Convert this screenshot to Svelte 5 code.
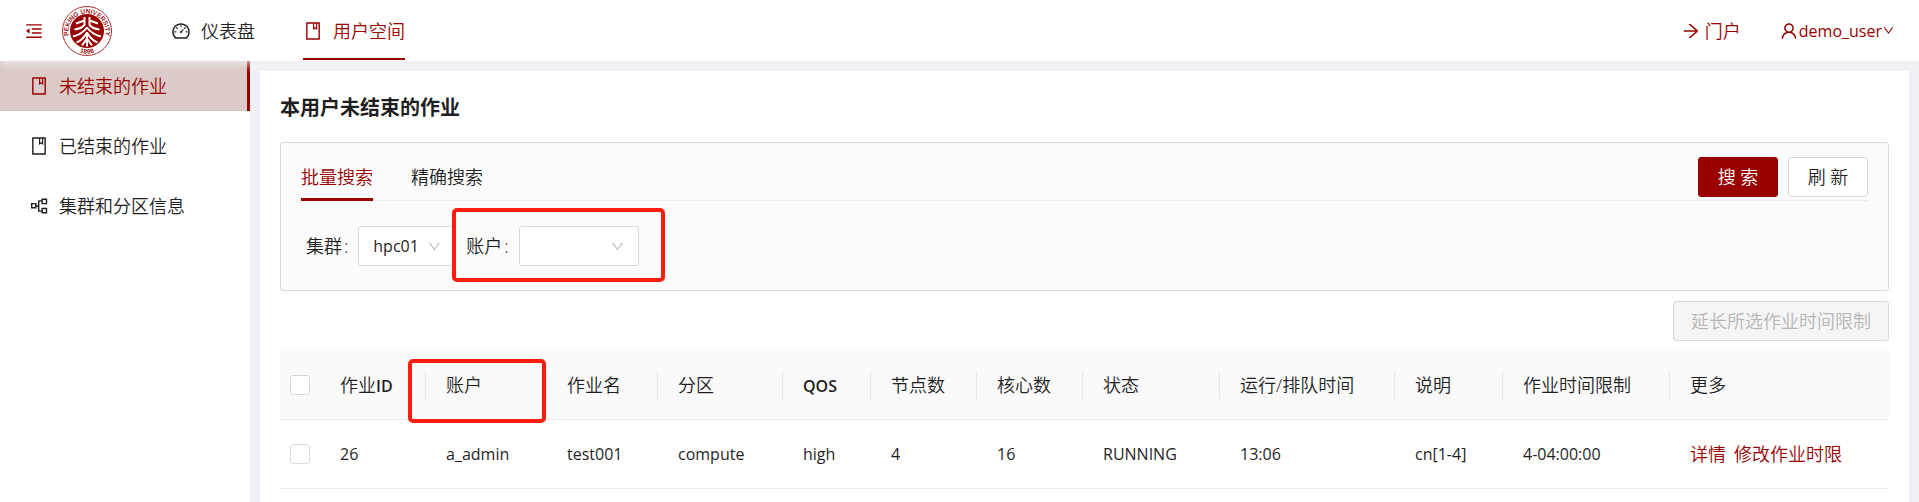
<script>
  const icons = {
    fold: 'M408 442h480c4.4 0 8-3.6 8-8v-56c0-4.4-3.6-8-8-8H408c-4.4 0-8 3.6-8 8v56c0 4.4 3.6 8 8 8zm-8 204c0 4.4 3.6 8 8 8h480c4.4 0 8-3.6 8-8v-56c0-4.4-3.6-8-8-8H408c-4.4 0-8 3.6-8 8v56zm504-486H120c-4.4 0-8 3.6-8 8v56c0 4.4 3.6 8 8 8h784c4.4 0 8-3.6 8-8v-56c0-4.4-3.6-8-8-8zm0 632H120c-4.4 0-8 3.6-8 8v56c0 4.4 3.6 8 8 8h784c4.4 0 8-3.6 8-8v-56c0-4.4-3.6-8-8-8zM115.4 518.9L271.7 642c5.8 4.6 14.4.5 14.4-6.9V388.9c0-7.4-8.5-11.5-14.4-6.9L115.4 505.1a8.74 8.74 0 000 13.8z',
    dashboard:
      'M924.8 385.6a446.7 446.7 0 00-96-142.4 446.7 446.7 0 00-142.4-96C631.1 123.8 572.5 112 512 112s-119.1 11.8-174.4 35.2a446.7 446.7 0 00-142.4 96 446.7 446.7 0 00-96 142.4C75.8 440.9 64 499.5 64 560c0 132.7 58.3 257.7 159.9 343.1l1.7 1.4c5.8 4.8 13.1 7.5 20.6 7.5h531.7c7.5 0 14.8-2.7 20.6-7.5l1.7-1.4C901.7 817.7 960 692.7 960 560c0-60.5-11.9-119.1-35.2-174.4zM761.4 836H262.6A371.12 371.12 0 01140 560c0-99.4 38.7-192.8 109-263 70.3-70.3 163.7-109 263-109 99.4 0 192.8 38.7 263 109 70.3 70.3 109 163.7 109 263 0 105.6-44.5 205.5-122.6 276zM623.5 421.5a8.03 8.03 0 00-11.3 0L527.7 506c-18.7-5-39.4-.2-54.1 14.5a55.95 55.95 0 000 79.2 55.95 55.95 0 0079.2 0 55.87 55.87 0 0014.5-54.1l84.5-84.5c3.1-3.1 3.1-8.2 0-11.3l-28.3-28.3zM490 320h44c4.4 0 8-3.6 8-8v-80c0-4.4-3.6-8-8-8h-44c-4.4 0-8 3.6-8 8v80c0 4.4 3.6 8 8 8zm260 218v44c0 4.4 3.6 8 8 8h80c4.4 0 8-3.6 8-8v-44c0-4.4-3.6-8-8-8h-80c-4.4 0-8 3.6-8 8zm12.7-197.2l-31.1-31.1a8.03 8.03 0 00-11.3 0l-56.6 56.6a8.03 8.03 0 000 11.3l31.1 31.1c3.1 3.1 8.2 3.1 11.3 0l56.6-56.6c3.1-3.1 3.1-8.2 0-11.3zm-458.6-31.1a8.03 8.03 0 00-11.3 0l-31.1 31.1a8.03 8.03 0 000 11.3l56.6 56.6c3.1 3.1 8.2 3.1 11.3 0l31.1-31.1c3.1-3.1 3.1-8.2 0-11.3l-56.6-56.6zM262 530h-80c-4.4 0-8 3.6-8 8v44c0 4.4 3.6 8 8 8h80c4.4 0 8-3.6 8-8v-44c0-4.4-3.6-8-8-8z',
    book: 'M832 64H192c-17.7 0-32 14.3-32 32v832c0 17.7 14.3 32 32 32h640c17.7 0 32-14.3 32-32V96c0-17.7-14.3-32-32-32zm-260 72h96v209.9L621.5 312 572 347.4V136zm220 752H232V136h280v296.9c0 3.3 1 6.6 3 9.3a15.9 15.9 0 0022.3 3.7l83.8-59.9 81.4 59.4c2.7 2 6 3.1 9.4 3.1 8.8 0 16-7.2 16-16V136h64v752z',
    nodes:
      'M100 352h288v122h72V246c0-20 12-34 34-34h142v-84h296v296H636V284H532v456h104V600h296v296H636v-84H494c-22 0-34-14-34-34V546h-72v94H100zM172 424v144h144V424zM708 200v152h152V200zM708 672v152h152V672z',
    arrow: 'M869 487.8L491.2 159.9c-2.9-2.5-6.6-3.9-10.5-3.9h-88.5c-7.4 0-10.8 9.2-5.2 14l350.2 304H152c-4.4 0-8 3.6-8 8v60c0 4.4 3.6 8 8 8h585.1L386.9 854c-5.6 4.9-2.2 14 5.2 14h91.5c1.9 0 3.8-.7 5.2-2L869 536.2a32.07 32.07 0 000-48.4z',
    user: 'M858.5 763.6a374 374 0 00-80.6-119.5 375.63 375.63 0 00-119.5-80.6c-.4-.2-.8-.3-1.2-.5C719.5 518 760 444.7 760 362c0-137-111-248-248-248S264 225 264 362c0 82.7 40.5 156 102.8 201.1-.4.2-.8.3-1.2.5-44.8 18.9-85 46-119.5 80.6a375.63 375.63 0 00-80.6 119.5A371.7 371.7 0 00136 901.8a8 8 0 008 8.2h60c4.4 0 7.9-3.5 8-7.8 2-77.2 33-149.5 87.8-204.3 56.7-56.7 132-87.9 212.2-87.9s155.5 31.2 212.2 87.9C779 752.7 810 825 812 902.2c.1 4.4 3.6 7.8 8 7.8h60a8 8 0 008-8.2c-1-47.8-10.9-94.3-29.5-138.2zM512 534c-45.9 0-89.1-17.9-121.6-50.4S340 407.9 340 362c0-45.9 17.9-89.1 50.4-121.6S466.1 190 512 190s89.1 17.9 121.6 50.4S684 316.1 684 362c0 45.9-17.9 89.1-50.4 121.6S557.9 534 512 534z',
    down: 'M884 256h-75c-5.1 0-9.9 2.5-12.9 6.6L512 654.2 227.9 262.6c-3-4.1-7.8-6.6-12.9-6.6h-75c-6.5 0-10.3 7.4-6.5 12.7l352.6 486.1c12.8 17.6 39 17.6 51.7 0l352.6-486.1c3.9-5.3.1-12.7-6.4-12.7z',
  };

  const side = [
    { icon: 'book', text: '未结束的作业', active: true },
    { icon: 'book', text: '已结束的作业', active: false },
    { icon: 'nodes', text: '集群和分区信息', active: false },
  ];

  // title, Latin suffix of the title, column share
  const columns = [
    ['作业', 'ID', 106],
    ['账户', '', 121],
    ['作业名', '', 111],
    ['分区', '', 125],
    ['', 'QOS', 88],
    ['节点数', '', 106],
    ['核心数', '', 106],
    ['状态', '', 137],
    ['运行/排队时间', '', 175],
    ['说明', '', 108],
    ['作业时间限制', '', 167],
    ['更多', '', 219],
  ];

  const jobs = [
    ['26', 'a_admin', 'test001', 'compute', 'high', '4', '16', 'RUNNING', '13:06', 'cn[1-4]', '4-04:00:00'],
  ];

  let cluster = $state('hpc01');
  let account = $state('');
</script>

{#snippet icon(name, size = 20)}
  <svg class="icon" width={size} height={size} viewBox="0 0 1024 1024" aria-hidden="true">
    <path fill-rule="evenodd" d={icons[name]} />
  </svg>
{/snippet}

<div class="page">
  <header>
    <button class="fold" aria-label="menu">{@render icon('fold')}</button>
    <a class="logo" href="#home" aria-label="home">
      <svg width="50" height="50" viewBox="0 0 100 100">
        <defs>
          <path id="ring-top" d="M22 76A37 37 0 1 1 78 76" />
          <path id="ring-bottom" d="M24 87A45 45 0 0 0 76 87" />
        </defs>
        <circle cx="50" cy="50" r="49" fill="#fff" stroke="#b03030" stroke-width="2" />
        <circle cx="50" cy="50" r="34" fill="#990000" />
        <text class="seal"><textPath href="#ring-top" startOffset="50%" text-anchor="middle">PEKING UNIVERSITY</textPath></text>
        <text class="seal"><textPath href="#ring-bottom" startOffset="50%" text-anchor="middle">1898</textPath></text>
        <g fill="none" stroke="#fff" stroke-width="4" stroke-linejoin="round">
          <path d="M45 22v17M45 29L28 35M45 38C40 44 34 46 25 47" />
          <path d="M55 22v17M55 29L72 35M55 38C60 44 66 46 75 47" />
          <path d="M50 43C43 53 34 58 22 61M50 43C57 53 66 58 78 61" />
          <path d="M50 53C45 63 38 69 29 73M50 53C55 63 62 69 71 73" />
          <path d="M50 53v28M50 65L40 79M50 65L60 79" />
        </g>
      </svg>
    </a>
    <nav class="top">
      <a href="#dashboard">{@render icon('dashboard')}<span>仪表盘</span></a>
      <a href="#user" class="active">{@render icon('book')}<span>用户空间</span></a>
    </nav>
    <div class="account">
      <a href="#portal">{@render icon('arrow')}<span>门户</span></a>
      <button class="user">{@render icon('user')}<span>demo_user</span>{@render icon('down', 13)}</button>
    </div>
  </header>

  <div class="body">
    <aside>
      {#each side as item}
        <a href="#jobs" class:active={item.active}>{@render icon(item.icon)}<span>{item.text}</span></a>
      {/each}
    </aside>

    <main>
      <h1>本用户未结束的作业</h1>

      <form class="filter" onsubmit={(e) => e.preventDefault()}>
        <div class="tabs">
          <button type="button" class="tab active">批量搜索</button>
          <button type="button" class="tab">精确搜索</button>
          <div class="actions">
            <button class="btn primary">搜 索</button>
            <button type="button" class="btn">刷 新</button>
          </div>
        </div>
        <div class="fields">
          <label for="cluster">集群<i>:</i></label>
          <span class="select small">
            <select id="cluster" bind:value={cluster}><option>hpc01</option></select>
            {@render icon('down', 15)}
          </span>
          <label for="account">账户<i>:</i></label>
          <span class="select">
            <select id="account" bind:value={account}><option value=""></option></select>
            {@render icon('down', 15)}
          </span>
          <div class="mark mark-field"></div>
        </div>
      </form>

      <div class="toolbar"><button class="btn" disabled>延长所选作业时间限制</button></div>

      <div class="table">
        <table>
          <colgroup>
            <col style="width: 40px" />
            {#each columns as [, , width]}<col style="width: {width}px" />{/each}
          </colgroup>
          <thead>
            <tr>
              <th class="check"><input type="checkbox" aria-label="all" /></th>
              {#each columns as [title, latin]}<th>{title}<b>{latin}</b></th>{/each}
            </tr>
          </thead>
          <tbody>
            {#each jobs as job}
              <tr>
                <td class="check"><input type="checkbox" aria-label={job[0]} /></td>
                {#each job as value}<td>{value}</td>{/each}
                <td class="links"><a href="#detail">详情</a><a href="#limit">修改作业时限</a></td>
              </tr>
            {/each}
          </tbody>
        </table>
        <div class="mark mark-column"></div>
      </div>
    </main>
  </div>
</div>

<style>
  :global(body) {
    background: #f0f1f6;
  }
  .page {
    display: flex;
    flex-direction: column;
    min-height: 100vh;
    color: #1f1f1f;
    font: 350 18px/28px 'Open Sans', 'Noto Sans CJK SC', sans-serif;
  }
  * {
    box-sizing: border-box;
  }
  a {
    color: inherit;
    text-decoration: none;
  }
  button,
  select {
    font: inherit;
    color: inherit;
  }
  button {
    margin: 0;
    padding: 0;
    border: 0;
    background: none;
  }
  .icon {
    flex: none;
    fill: currentColor;
  }
  header {
    position: relative;
    z-index: 1;
    display: flex;
    align-items: center;
    height: 61px;
    padding: 0 24px;
    background: #fff;
    box-shadow: 0 2px 10px #f0f1f2;
  }
  .fold,
  .account {
    color: #990000;
  }
  .fold {
    display: flex;
  }
  .logo {
    display: flex;
    margin: 0 59px 0 18px;
  }
  .seal {
    font: 700 13px 'Liberation Sans', sans-serif;
    fill: #a31515;
  }
  .top {
    display: flex;
    align-self: flex-start;
    gap: 48px;
    height: 60px;
  }
  .top a {
    display: flex;
    align-items: center;
    gap: 10px;
    padding-top: 3px;
    border-bottom: 2px solid transparent;
  }
  .top .active {
    color: #990000;
    border-color: #990000;
  }
  .account {
    display: flex;
    gap: 38px;
    margin-left: auto;
  }
  .account a,
  .user {
    display: flex;
    align-items: center;
  }
  .account a {
    gap: 4px;
  }
  .user {
    font-size: 16px;
    font-weight: 400;
  }
  .body {
    display: flex;
    flex: 1;
  }
  aside {
    flex: 0 0 250px;
    display: flex;
    flex-direction: column;
    gap: 10px;
    background: #fff;
  }
  aside a {
    display: flex;
    align-items: center;
    gap: 10px;
    height: 50px;
    padding-left: 29px;
  }
  aside .active {
    color: #990000;
    background: #dbcac7;
    border-right: 3px solid #990000;
  }
  main {
    flex: 1;
    min-width: 0;
    margin: 10px 10px 0;
    padding: 20px 20px 0;
    background: #fff;
  }
  h1 {
    margin: 0 0 17px;
    font-size: 20px;
    line-height: 34px;
    font-weight: 700;
  }
  .filter {
    padding: 10px 20px 24px;
    background: #fbfbfb;
    border: 1px solid #d9d9d9;
    border-radius: 3px;
  }
  .tabs {
    display: flex;
    gap: 38px;
    height: 48px;
    border-bottom: 1px solid #ededed;
  }
  .tab {
    height: 48px;
    padding-top: 2px;
    border-bottom: 3px solid transparent;
  }
  .tab.active {
    color: #990000;
    border-color: #990000;
  }
  .actions {
    display: flex;
    gap: 10px;
    margin: 4px 0 0 auto;
  }
  .btn {
    height: 40px;
    padding: 0 17px;
    border: 1px solid #d9d9d9;
    border-radius: 3px;
    background: #fff;
  }
  .actions .btn {
    width: 80px;
  }
  .btn.primary {
    color: #fff;
    background: #990000;
    border-color: #990000;
  }
  .btn:disabled {
    color: #b5b5b5;
    background: #f5f5f5;
  }
  .fields {
    position: relative;
    display: flex;
    align-items: center;
    gap: 10px;
    padding: 25px 0 0 5px;
  }
  label {
    display: flex;
    gap: 2px;
  }
  i {
    font-style: normal;
  }
  .select {
    display: flex;
    align-items: center;
    width: 120px;
  }
  .select.small {
    width: 98px;
  }
  select {
    appearance: none;
    width: 100%;
    height: 40px;
    padding: 0 14px;
    font-size: 16px;
    font-weight: 400;
    border: 1px solid #d9d9d9;
    border-radius: 3px;
    background: #fff;
  }
  .select .icon {
    margin-left: -29px;
    color: #bfbfbf;
    pointer-events: none;
  }
  .mark {
    position: absolute;
    border: 4px solid #ff1d10;
    border-radius: 5px;
    pointer-events: none;
  }
  .mark-field {
    left: 151px;
    top: 7px;
    width: 213px;
    height: 74px;
  }
  .mark-column {
    left: 128px;
    top: 8px;
    width: 138px;
    height: 64px;
  }
  .toolbar {
    display: flex;
    justify-content: flex-end;
    margin: 10px 0;
  }
  .table {
    position: relative;
  }
  table {
    width: 100%;
    table-layout: fixed;
    border-collapse: separate;
    border-spacing: 0;
  }
  th,
  td {
    position: relative;
    height: 69px;
    padding: 0 0 0 20px;
    text-align: left;
    white-space: nowrap;
    border-bottom: 1px solid #ededed;
  }
  th {
    font-weight: inherit;
    background: #fafafa;
  }
  b {
    font-size: 16px;
    font-weight: 600;
  }
  td {
    font-size: 16px;
    font-weight: 400;
  }
  th:not(.check, :last-child)::after {
    content: '';
    position: absolute;
    right: 0;
    top: 20px;
    height: 28px;
    border-right: 1px solid #e8e8e8;
  }
  .check {
    padding-left: 10px;
  }
  input {
    appearance: none;
    display: block;
    width: 20px;
    height: 20px;
    margin: 0;
    border: 1px solid #d9d9d9;
    border-radius: 3px;
    background: #fff;
  }
  .links {
    color: #990000;
    font-size: 18px;
    font-weight: inherit;
  }
  .links a + a {
    margin-left: 8px;
  }
</style>
